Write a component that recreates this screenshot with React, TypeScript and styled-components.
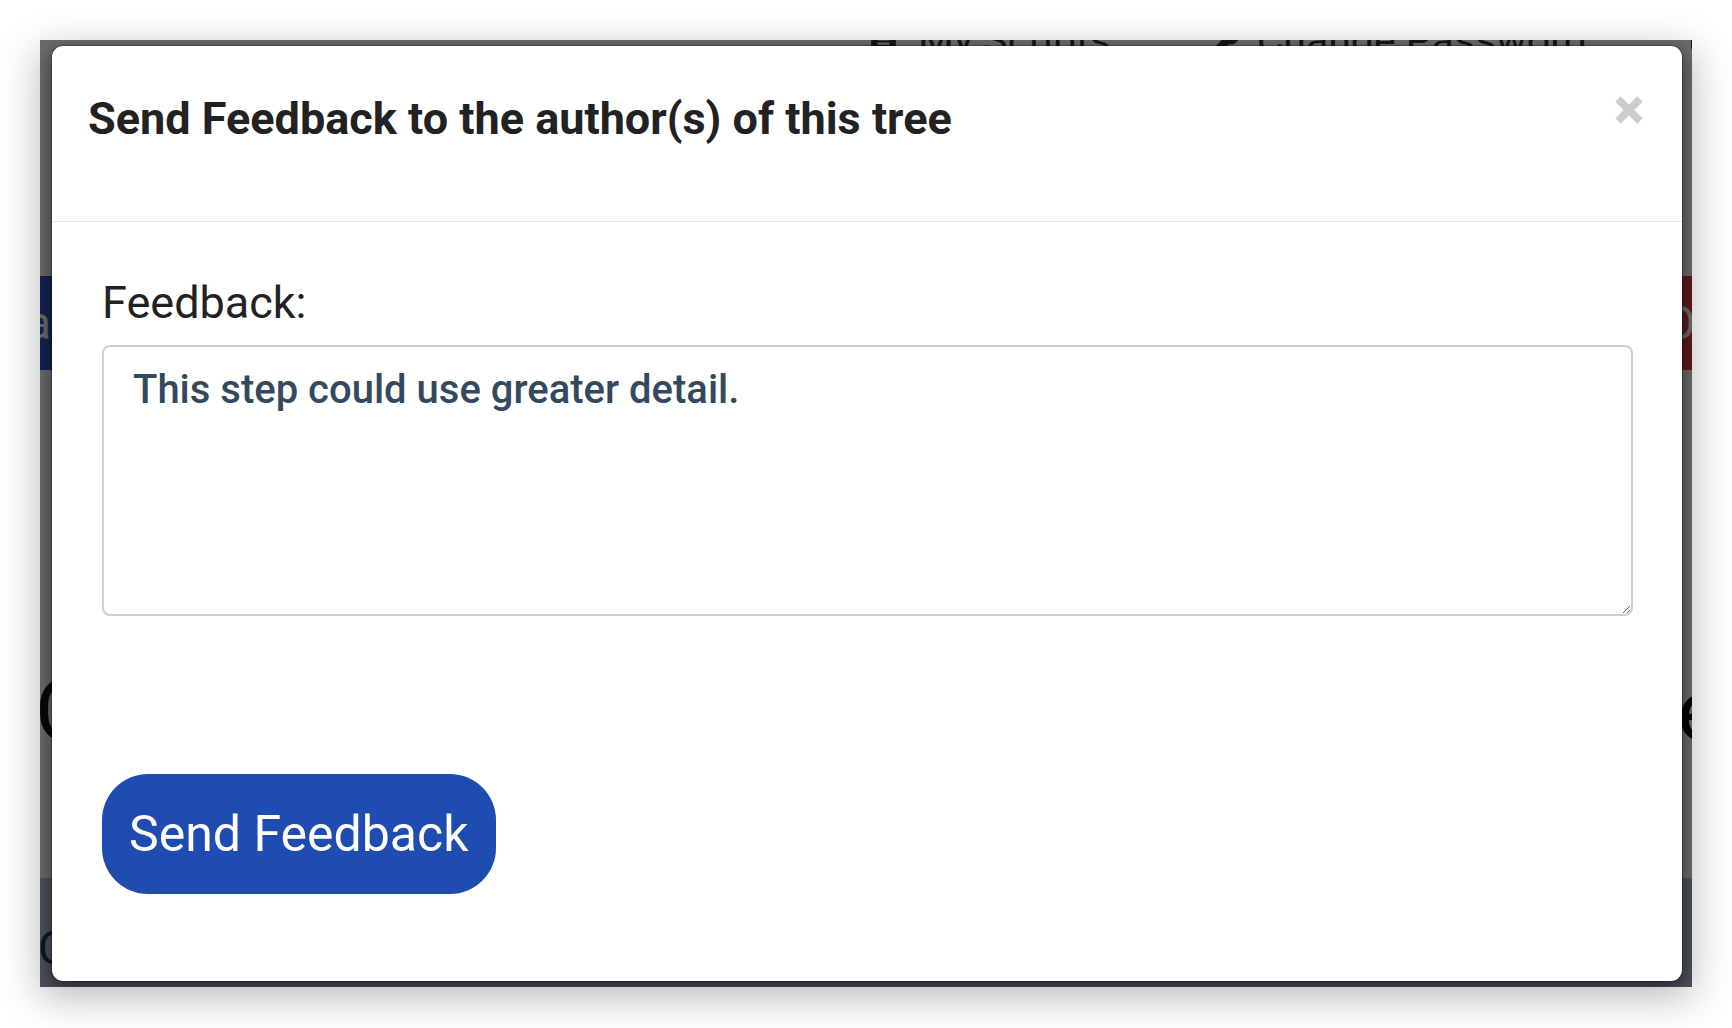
import React from 'react'
import { styled, createGlobalStyle } from 'styled-components'
import { FaFileAlt, FaKey, FaSignOutAlt } from 'react-icons/fa'

const GlobalStyle = createGlobalStyle`
  html, body {
    margin: 0;
    padding: 0;
    background: #fff;
  }
  body {
    font-family: Roboto, 'Liberation Sans', Arial, sans-serif;
  }
  * {
    box-sizing: border-box;
  }
`

const Page = styled.div`
  width: 1732px;
  height: 1028px;
  padding: 40px;
`

const Screen = styled.div`
  position: relative;
  width: 1652px;
  height: 947px;
  overflow: hidden;
  background: #fff;
  box-shadow: 0 10px 38px rgba(0, 0, 0, 0.28);
`

/* the page that sits behind the dimmed backdrop */
const Backdrop = styled.div`
  display: flex;
  flex-direction: column;
  height: 100%;
  white-space: nowrap;
`

const TopNav = styled.nav`
  display: flex;
  align-items: center;
  gap: 104px;
  height: 60px;
  margin-top: -30px;
  padding-left: 827px;
  font-size: 41px;
  color: #333;
`

const NavItem = styled.span`
  display: flex;
  align-items: center;
  gap: 18px;
`

const ActionBar = styled.div`
  display: flex;
  justify-content: space-between;
  height: 94px;
  margin-top: 206px;
`

const ActionButton = styled.div<{ $tone: 'navy' | 'red' }>`
  display: flex;
  align-items: center;
  width: 200px;
  font-size: 46px;
  color: #fff;
  background: ${p => (p.$tone === 'navy' ? '#2957c1' : '#de3f43')};
  justify-content: ${p => (p.$tone === 'navy' ? 'flex-end' : 'flex-start')};
  margin: ${p => (p.$tone === 'navy' ? '0 0 0 -155px' : '0 -150px 0 0')};
  padding: ${p => (p.$tone === 'navy' ? '0 34px 0 0' : '0 0 0 22px')};
`

const Heading = styled.h1`
  display: flex;
  justify-content: space-between;
  margin: 291px 0 0;
  font-size: 86px;
  font-weight: 400;
  line-height: 100px;
  color: #111;
`

const HeadingEdge = styled.span<{ $end?: boolean }>`
  margin: ${p => (p.$end ? '0 -75px 0 0' : '0 0 0 -5px')};
`

const Footer = styled.footer`
  margin-top: auto;
  height: 109px;
  padding-top: 43px;
  background: #b7c1d4;
  font-size: 46px;
  line-height: 55px;
  color: #1b3a5f;
`

const FooterText = styled.span`
  margin-left: -2px;
`

const Overlay = styled.div`
  position: absolute;
  inset: 0;
  background: rgba(0, 0, 0, 0.585);
`

const ModalLayer = styled.div`
  position: absolute;
  inset: 0;
  display: flex;
  padding: 5px 9px 5px 11px;
`

const Modal = styled.div`
  flex: 1;
  display: flex;
  flex-direction: column;
  background: #fff;
  background-clip: padding-box;
  border: 1px solid rgba(0, 0, 0, 0.25);
  border-radius: 12px;
  box-shadow: 0 6px 18px rgba(0, 0, 0, 0.5);
`

const ModalHeader = styled.div`
  display: flex;
  justify-content: space-between;
  align-items: flex-start;
  height: 176px;
  padding: 47px 39px 0 36px;
  border-bottom: 1px solid #e5e5e5;
`

const Title = styled.h4`
  margin: 0;
  font-size: 45px;
  font-weight: 700;
  line-height: 52px;
  color: #222;
`

const CloseButton = styled.button`
  display: flex;
  width: 28px;
  height: 28px;
  margin-top: 3px;
  padding: 0;
  border: none;
  background: none;
  cursor: pointer;
`

const ModalBody = styled.div`
  display: flex;
  flex-direction: column;
  align-items: flex-start;
  padding: 53px 49px 0 50px;
`

const Label = styled.label`
  display: block;
  margin-bottom: 15px;
  font-size: 45px;
  line-height: 55px;
  color: #222;
`

const FeedbackInput = styled.textarea`
  width: 100%;
  height: 271px;
  padding: 14px 29px;
  border: 2px solid #cfcfcf;
  border-radius: 8px;
  outline: none;
  font-family: Roboto, 'Liberation Sans', Arial, sans-serif;
  font-size: 40px;
  font-weight: 500;
  line-height: 57px;
  color: #34495e;
`

const SendButton = styled.button`
  height: 120px;
  margin-top: 158px;
  padding: 0 27px;
  border: none;
  border-radius: 46px;
  background: #1f4cb0;
  font-family: Roboto, 'Liberation Sans', Arial, sans-serif;
  font-size: 50px;
  color: #fff;
  cursor: pointer;
`

function App() {
  return (
    <Page>
      <GlobalStyle />
      <Screen>
        <Backdrop>
          <TopNav>
            <NavItem><FaFileAlt size={33} /> My Scripts</NavItem>
            <NavItem><FaKey size={24} /> Change Password</NavItem>
            <NavItem><FaSignOutAlt size={33} /> Logout</NavItem>
          </TopNav>
          <ActionBar>
            <ActionButton $tone="navy">Data</ActionButton>
            <ActionButton $tone="red">Orders</ActionButton>
          </ActionBar>
          <Heading>
            <HeadingEdge>Concepts</HeadingEdge>
            <HeadingEdge $end>es</HeadingEdge>
          </Heading>
          <Footer>
            <FooterText>Contact</FooterText>
          </Footer>
        </Backdrop>
        <Overlay />
        <ModalLayer>
          <Modal>
            <ModalHeader>
              <Title>Send Feedback to the author(s) of this tree</Title>
              <CloseButton aria-label="Close">
                <svg width="28" height="28" viewBox="0 0 28 28">
                  <path d="M3 3 L25 25 M25 3 L3 25" stroke="#cccccc" strokeWidth="7.5" />
                </svg>
              </CloseButton>
            </ModalHeader>
            <ModalBody>
              <Label htmlFor="feedback">Feedback:</Label>
              <FeedbackInput id="feedback" defaultValue="This step could use greater detail." />
              <SendButton>Send Feedback</SendButton>
            </ModalBody>
          </Modal>
        </ModalLayer>
      </Screen>
    </Page>
  )
}

export default App
